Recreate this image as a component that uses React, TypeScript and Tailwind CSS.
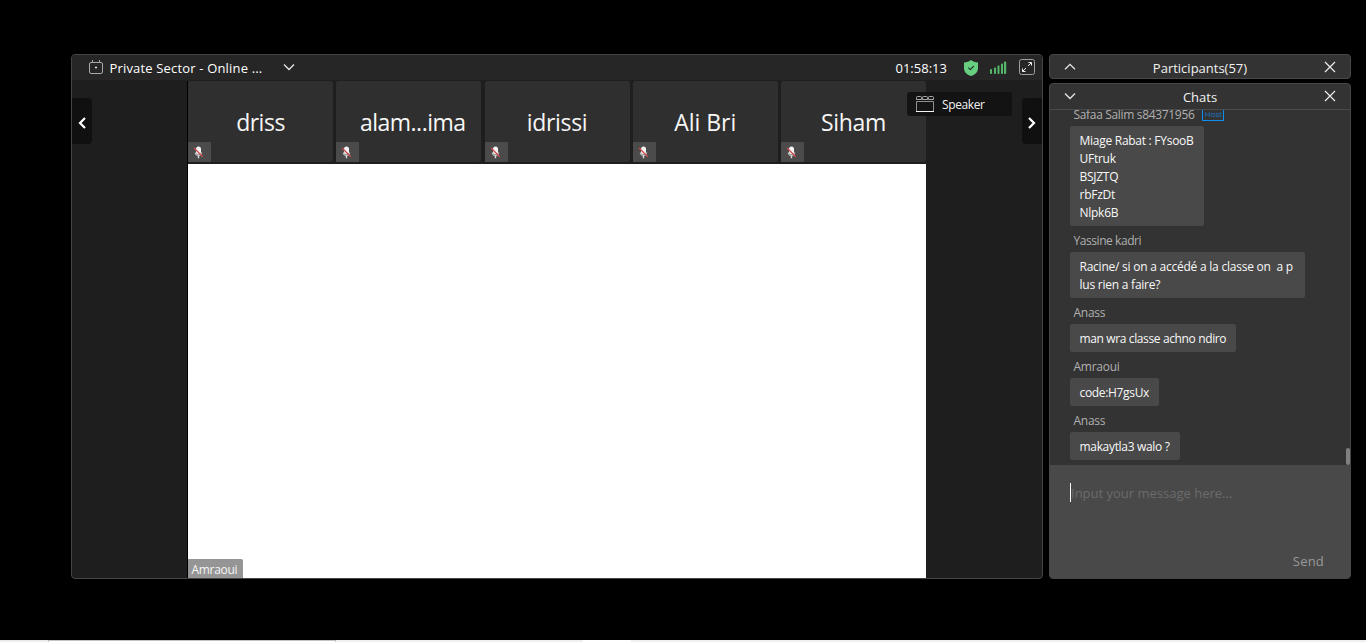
import type { ReactNode } from "react";

type Tile = { name: string; tracking: string };

const tiles: Tile[] = [
  { name: "driss", tracking: "tracking-[-0.5px]" },
  { name: "alam...ima", tracking: "tracking-[-0.5px] pl-[8px]" },
  { name: "idrissi", tracking: "tracking-[-0.3px]" },
  { name: "Ali Bri", tracking: "tracking-[-0.05px]" },
  { name: "Siham", tracking: "tracking-[-0.35px]" },
];

type Message = {
  author: string;
  authorTracking: string;
  lines: string[];
  tracking: string;
  width: string;
  host?: boolean;
};

const messages: Message[] = [
  {
    author: "Safaa Salim s84371956",
    authorTracking: "tracking-[-0.33px]",
    host: true,
    lines: ["Miage Rabat : FYsooB", "UFtruk", "BSJZTQ", "rbFzDt", "Nlpk6B"],
    tracking: "tracking-[-0.27px]",
    width: "w-[134px]",
  },
  {
    author: "Yassine kadri",
    authorTracking: "tracking-[-0.44px]",
    lines: ["Racine/ si on a accédé a la classe on  a p", "lus rien a faire?"],
    tracking: "tracking-[-0.235px]",
    width: "w-[235px]",
  },
  {
    author: "Anass",
    authorTracking: "tracking-[-0.27px]",
    lines: ["man wra classe achno ndiro"],
    tracking: "tracking-[-0.37px]",
    width: "w-[166px]",
  },
  {
    author: "Amraoui",
    authorTracking: "tracking-[-0.27px]",
    lines: ["code:H7gsUx"],
    tracking: "tracking-[-0.33px]",
    width: "w-[89px]",
  },
  {
    author: "Anass",
    authorTracking: "tracking-[-0.27px]",
    lines: ["makaytla3 walo ?"],
    tracking: "tracking-[-0.32px]",
    width: "w-[110px]",
  },
];

function Chevron({ up = false }: { up?: boolean }) {
  return (
    <svg width="12" height="8" viewBox="0 0 12 8" fill="none" stroke="#e6e6e6" strokeWidth="1.3" className="shrink-0">
      <path d={up ? "M1 6.3 6 1.3l5 5" : "M1 1.5l5 5 5-5"} />
    </svg>
  );
}

function CloseIcon() {
  return (
    <svg width="12" height="12" viewBox="0 0 12 12" fill="none" stroke="#ececec" strokeWidth="1.2" className="shrink-0">
      <path d="M1 1l10 10M11 1L1 11" />
    </svg>
  );
}

function MeetingIcon() {
  return (
    <svg width="14" height="14" viewBox="0 0 14 14" fill="none" stroke="#a8a8a8" className="shrink-0">
      <path d="M2 2.500h10a1.500 1.500 0 0 1 1.500 1.500v8a1.500 1.500 0 0 1-1.500 1.500H2A1.500 1.500 0 0 1 .5 12V4A1.500 1.500 0 0 1 2 2.500z" />
      <path d="M3.500 0v2.500M10.500 0v2.500" />
      <path d="M6 7.500h2" strokeWidth="1.600" stroke="#e8e8e8" />
    </svg>
  );
}

function MutedMic() {
  return (
    <svg width="11" height="13" viewBox="0 0 11 13" fill="none" className="shrink-0">
      <rect x="3" y="0.500" width="5" height="8" rx="2.500" fill="#f4f4f4" />
      <path d="M2.300 6.500c.3 2 1.600 3 3.200 3s2.900-1 3.200-3" stroke="#c4c4c4" strokeWidth="1.200" />
      <path d="M5.500 9.500v2.800" stroke="#dcdcdc" strokeWidth="1.400" />
      <path d="M1 2l8.800 8.800" stroke="#cc4b4a" strokeWidth="1.300" />
    </svg>
  );
}

function ShieldIcon() {
  return (
    <svg width="14" height="16" viewBox="0 0 14 16" fill="none" className="shrink-0">
      <path d="M7 0c1.800 1.500 4.200 2.200 7 2.400v5.800c0 3.700-2.700 6.300-7 7.800-4.300-1.500-7-4.100-7-7.800V2.400C2.800 2.200 5.200 1.500 7 0z" fill="#68cf80" />
      <path d="M4.300 7.600l2 2 3.500-3.600" stroke="#23402a" strokeWidth="1.200" />
    </svg>
  );
}

function SignalIcon() {
  return (
    <svg width="17" height="14" viewBox="0 0 17 14" fill="#55b568" className="shrink-0">
      <rect x="0" y="8" width="2" height="5" rx="0.800" />
      <rect x="4" y="6.500" width="2" height="6.500" rx="0.800" />
      <rect x="7.500" y="4.500" width="2" height="8.500" rx="0.800" />
      <rect x="11" y="2.500" width="2" height="10.500" rx="0.800" />
      <rect x="14" y="0.500" width="2.200" height="12.500" rx="0.800" />
    </svg>
  );
}

function ExpandIcon() {
  return (
    <svg width="16" height="16" viewBox="0 0 16 16" fill="none" className="shrink-0">
      <rect x="0.500" y="0.500" width="15" height="15" rx="2" stroke="#a0a0a0" />
      <path d="M9.500 3.500h3v3M12.500 3.500L9 7M3.500 9.500v3h3M3.500 12.500L7 9" stroke="#ececec" />
    </svg>
  );
}

function SpeakerViewIcon() {
  return (
    <svg width="18" height="16" viewBox="0 0 18 16" fill="none" className="shrink-0">
      <path d="M.5 3.500v-2a1 1 0 0 1 1-1h3a1 1 0 0 1 1 1v2zM6.500 3.500v-2a1 1 0 0 1 1-1h3a1 1 0 0 1 1 1v2zM12.500 3.500v-2a1 1 0 0 1 1-1h3a1 1 0 0 1 1 1v2z" stroke="#a8a8a8" />
      <path d="M.5 15V5.500h17V15" stroke="#909090" />
      <path d="M0 15.500h18" stroke="#f4f4f4" />
    </svg>
  );
}

function PageArrow({ right = false }: { right?: boolean }) {
  return (
    <svg width="8" height="12" viewBox="0 0 8 12" fill="none" stroke="#ffffff" strokeWidth="2.200" className="shrink-0">
      <path d={right ? "M1 1l5 5-5 5" : "M7 1L2 6l5 5"} />
    </svg>
  );
}

function PanelHeader({ up, children }: { up?: boolean; children: ReactNode }) {
  return (
    <div className="flex h-full items-center justify-between pl-[14px] pr-[14px] text-[13px] leading-[18px] text-[#f2f2f2]">
      <div className={up ? "" : "pb-[2px]"}>
        <Chevron up={up} />
      </div>
      {children}
      <div className={up ? "" : "pb-px"}>
        <CloseIcon />
      </div>
    </div>
  );
}

function ParticipantTile({ tile }: { tile: Tile }) {
  return (
    <div className="relative flex h-[81px] w-[145px] items-center justify-center rounded-[2px] bg-[#2f2f2f] text-[23px] leading-[30px] text-[#f7f7f7]">
      <span className={`pt-px ${tile.tracking}`}>{tile.name}</span>
      <div className="absolute bottom-0 left-0 flex h-5 w-[23px] items-center justify-center bg-[#4b4b4b] pr-[2px]">
        <MutedMic />
      </div>
    </div>
  );
}

function MeetingWindow() {
  return (
    <section className="flex h-[525px] w-[972px] flex-col overflow-hidden rounded-[4px] border border-[#444444] bg-[#1e1e1e]">
      <header className="flex h-[26px] shrink-0 items-center border-b border-[#1f1f1f] bg-[#262626] text-[13px] leading-[18px] text-white">
        <div className="w-[17px]" />
        <div className="pb-px">
          <MeetingIcon />
        </div>
        <span className="ml-[6.500px] w-[173.500px] whitespace-pre tracking-[0.17px]">Private Sector - Online ...</span>
        <div className="pb-[2px]">
          <Chevron />
        </div>
        <div className="ml-auto flex items-center">
          <span className="w-[68.500px]">01:58:13</span>
          <ShieldIcon />
          <div className="ml-[12px] mr-[12px]">
            <SignalIcon />
          </div>
          <div className="mr-[7px] pb-px">
            <ExpandIcon />
          </div>
        </div>
      </header>
      <div className="relative flex grow">
        <div className="flex w-[116px] shrink-0 flex-col border-r border-black pt-[17px]">
          <button className="flex h-[46px] w-5 items-center justify-center rounded-r-[4px] bg-[#101010] pr-px pt-[3px]">
            <PageArrow />
          </button>
        </div>
        <div className="flex w-[738px] shrink-0 flex-col">
          <div className="flex h-[83px] shrink-0 justify-between">
            {tiles.map((tile) => (
              <ParticipantTile key={tile.name} tile={tile} />
            ))}
          </div>
          <div className="flex grow items-end bg-white">
            <span className="flex h-[19px] w-[55px] items-center rounded-tr-[2px] bg-[#959595] pl-[3.500px] pt-[2px] text-[12px] leading-4 tracking-[-0.3px] text-[#f5f5f5]">
              Amraoui
            </span>
          </div>
        </div>
        <div className="flex grow flex-col items-end pt-[17px]">
          <button className="flex h-[46px] w-5 items-center justify-center rounded-l-[4px] bg-[#101010] pr-px pt-[3px]">
            <PageArrow right />
          </button>
        </div>
        <div className="absolute right-[30px] top-[11px] flex h-6 w-[105px] items-center rounded-[3px] bg-[#121212]/90 pl-[9px] text-[12px] leading-4 text-[#f2f2f2]">
          <SpeakerViewIcon />
          <span className="ml-[8px] mt-px tracking-[-0.38px]">Speaker</span>
        </div>
      </div>
    </section>
  );
}

function ChatMessage({ message }: { message: Message }) {
  return (
    <div className="flex flex-col items-start">
      <div className="flex h-[26px] items-center pl-[3.500px] pt-[3px] text-[12px] leading-4 text-[#b0b0b0]">
        <span className={message.authorTracking}>{message.author}</span>
        {message.host && (
          <span className="mb-px ml-[8px] flex h-[13px] w-[22px] items-center justify-center border border-[#0d8ff2] text-[8px] leading-none text-[#1479c6]">
            Host
          </span>
        )}
      </div>
      <div className={`rounded-[2px] bg-[#494949] pb-[4px] pl-[9.500px] pt-[6px] text-[12px] leading-[18px] text-[#f8f8f8] ${message.width} ${message.tracking}`}>
        {message.lines.map((line) => (
          <p key={line} className="whitespace-pre">
            {line}
          </p>
        ))}
      </div>
    </div>
  );
}

function ChatPanel() {
  return (
    <section className="flex h-[496px] flex-col overflow-hidden rounded-[4px] border border-[#484848] bg-[#333333]">
      <header className="h-[26px] shrink-0 border-b border-[#4a4a4a]">
        <PanelHeader>
          <span>Chats</span>
        </PanelHeader>
      </header>
      <div className="relative flex h-[355px] shrink-0 flex-col justify-end overflow-hidden pb-[5px] pl-5">
        {messages.map((message, index) => (
          <ChatMessage key={index} message={message} />
        ))}
        <div className="absolute bottom-0 right-0 h-[17px] w-1 rounded-[2px] bg-[#808080]" />
      </div>
      <div className="flex grow flex-col justify-between bg-[#494949] pb-[7px] pl-5 pr-[26px] pt-[18px] text-[13px] leading-[20px]">
        <div className="flex h-[19px] items-center border-l border-white text-[#6b6b6b]">
          <span className="pt-px">Input your message here...</span>
        </div>
        <button className="self-end tracking-[0.200px] text-[#999999]">Send</button>
      </div>
    </section>
  );
}

export default function App() {
  return (
    <main className="flex h-[642px] w-[1366px] flex-col overflow-hidden bg-black font-['Open_Sans','Noto_Sans',sans-serif]">
      <div className="flex grow gap-[6px] pl-[71px] pt-[54px]">
        <MeetingWindow />
        <aside className="flex w-[302px] flex-col gap-[4px]">
          <section className="h-[25px] rounded-[4px] border border-[#484848] bg-[#333333]">
            <PanelHeader up>
              <span className="pt-[2px]">Participants(57)</span>
            </PanelHeader>
          </section>
          <ChatPanel />
        </aside>
      </div>
      <footer className="flex h-[2px] shrink-0 bg-[#f0f0f0]">
        <div className="w-12 border-t border-[#e8e8e8]" />
        <div className="w-[288px] border-x border-t border-[#c4c4c4] bg-white" />
        <div className="w-[247px]" />
        <div className="w-12 bg-white" />
      </footer>
    </main>
  );
}
